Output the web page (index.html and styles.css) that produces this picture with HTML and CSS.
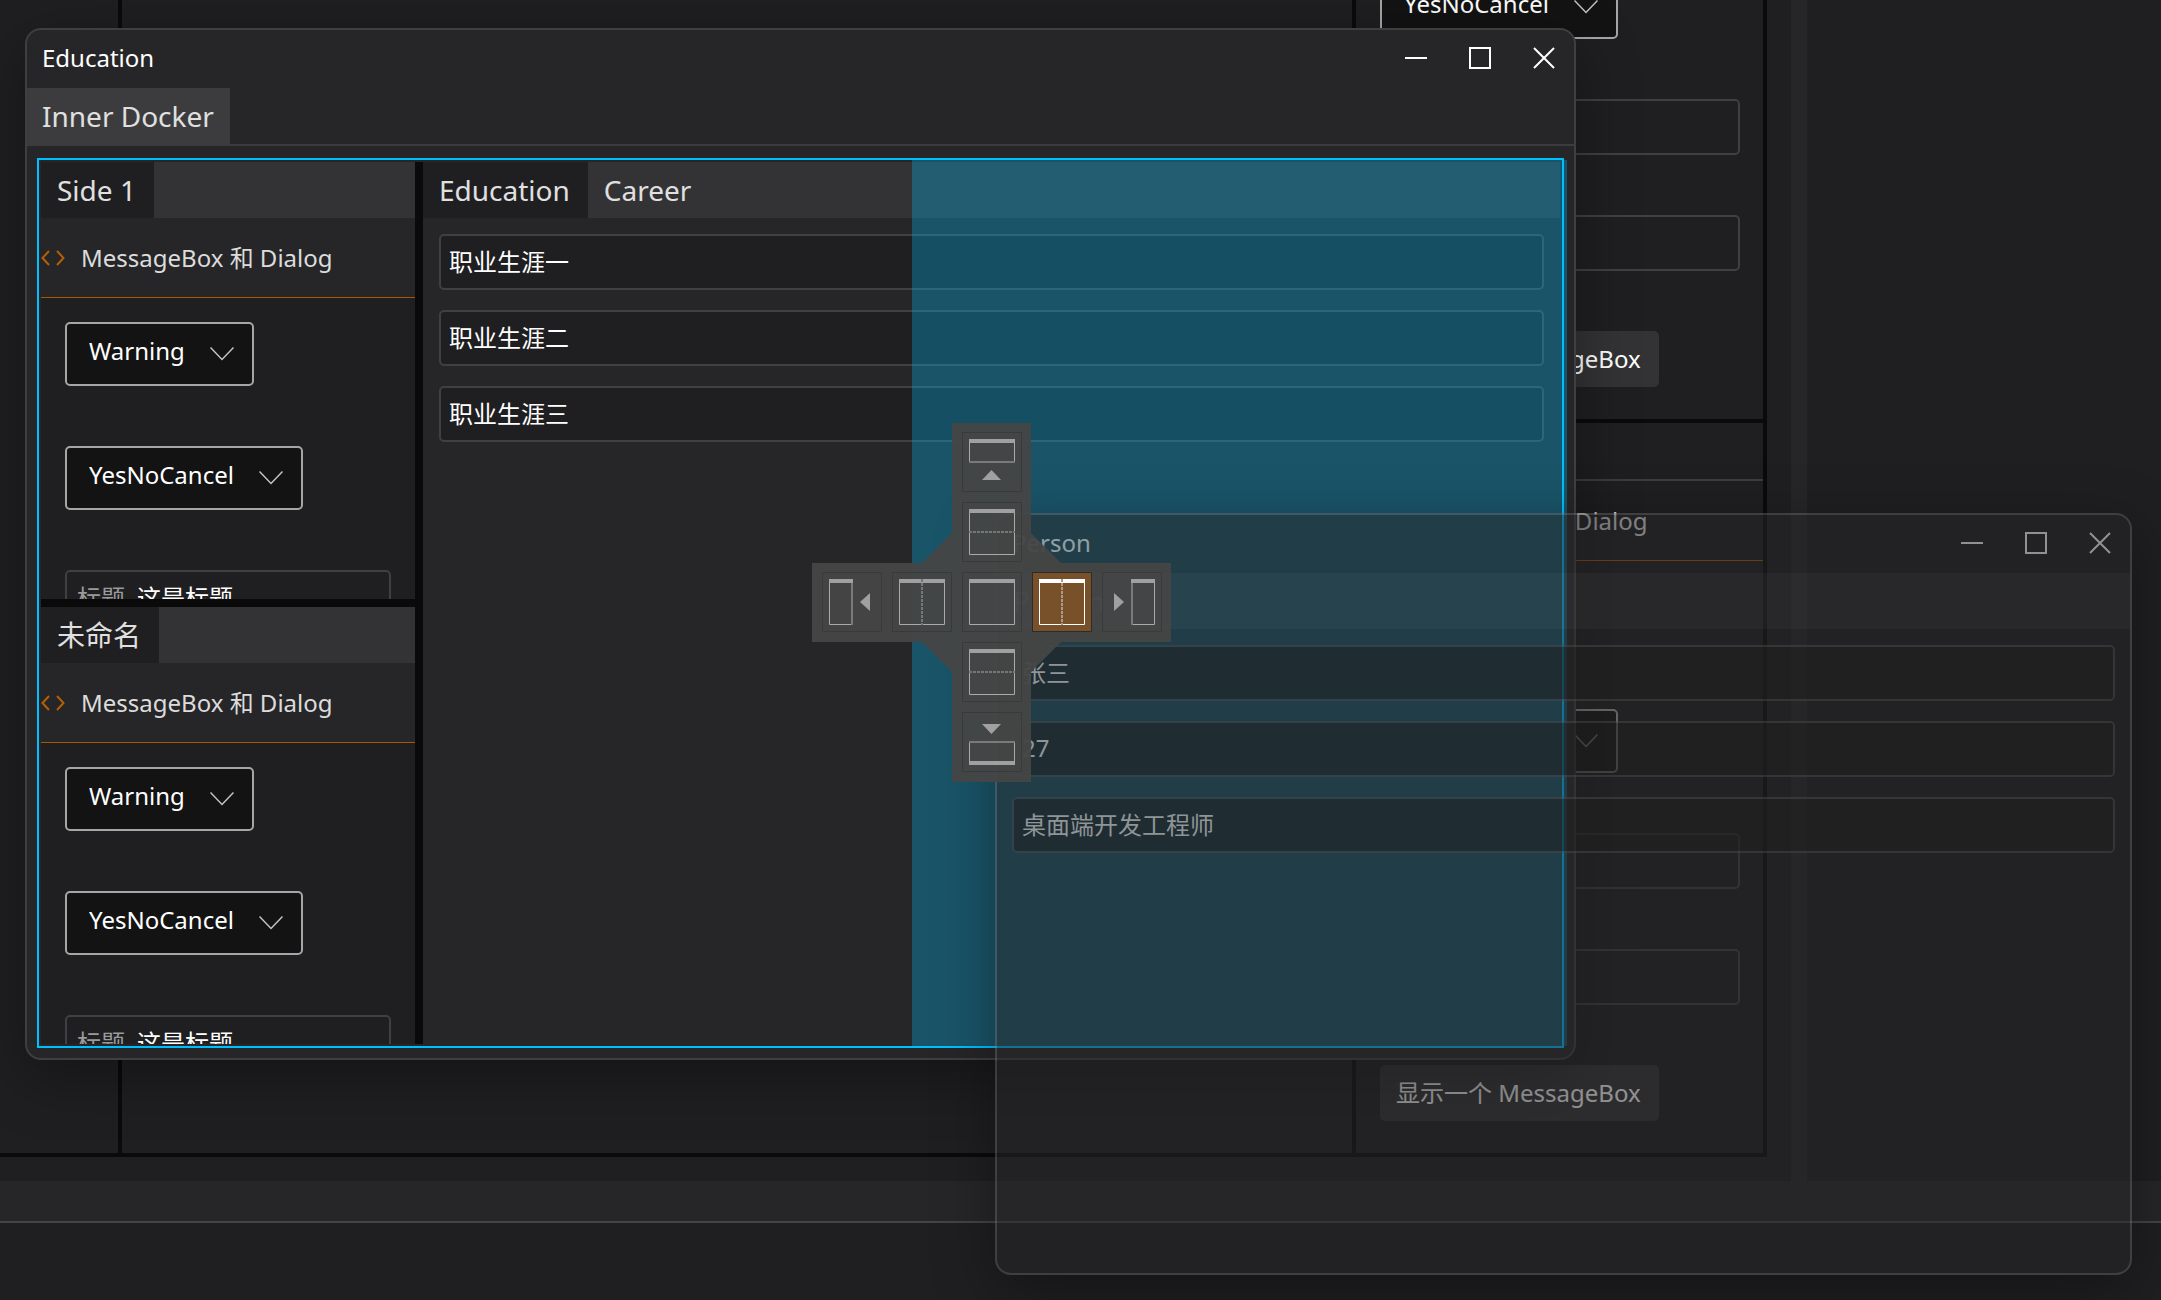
FILE: index.html
```html
<!DOCTYPE html>
<html lang="zh-CN">
<head>
<meta charset="utf-8">
<title>Docker</title>
<link rel="stylesheet" href="styles.css">
</head>
<body>
<svg class="defs" width="0" height="0" aria-hidden="true">
  <symbol id="chevron" viewBox="0 0 24 14"><path d="M0.5 0.5 12 12.5 23.5 0.5" fill="none" stroke="#c4c4c4" stroke-width="1.5"/></symbol>
  <symbol id="code" viewBox="0 0 24 16"><path d="M8 1 1.500 8 8 15M16 1 22.500 8 16 15" fill="none" stroke="#b45f06" stroke-width="2"/></symbol>
  <symbol id="minimize" viewBox="0 0 22 22"><path d="M0 11H22" stroke="#fff" stroke-width="2"/></symbol>
  <symbol id="maximize" viewBox="0 0 22 22"><path d="M1 1H21V21H1Z" fill="none" stroke="#fff" stroke-width="2"/></symbol>
  <symbol id="close" viewBox="0 0 22 22"><path d="M1 1 21 21M21 1 1 21" stroke="#fff" stroke-width="2"/></symbol>
</svg>

<main class="workspace">
  <div class="dock">
    <div class="dock-left"></div>
    <div class="dock-center"></div>
    <div class="dock-right">
      <section class="panel panel-top">
        <div class="form">
          <div class="combo"><select aria-label="图标"><option>Warning</option></select><svg><use href="#chevron"/></svg></div>
          <div class="combo"><select aria-label="按钮"><option>YesNoCancel</option></select><svg><use href="#chevron"/></svg></div>
          <label class="field"><span>标题</span><input type="text" value="这是标题"></label>
          <label class="field"><span>内容</span><input type="text" value="这是内容"></label>
          <button class="action" type="button">显示一个 MessageBox</button>
        </div>
      </section>
      <section class="panel">
        <div class="panel-tabs"></div>
        <h2 class="header"><svg><use href="#code"/></svg>MessageBox 和 Dialog</h2>
        <div class="form">
          <div class="combo"><select aria-label="图标"><option>Warning</option></select><svg><use href="#chevron"/></svg></div>
          <div class="combo"><select aria-label="按钮"><option>YesNoCancel</option></select><svg><use href="#chevron"/></svg></div>
          <label class="field"><span>标题</span><input type="text" value="这是标题"></label>
          <label class="field"><span>内容</span><input type="text" value="这是内容"></label>
          <button class="action" type="button">显示一个 MessageBox</button>
        </div>
      </section>
    </div>
  </div>
  <div class="gutter"></div>
  <div class="aside"></div>
</main>
<div class="toolbar"></div>
<footer class="status"></footer>

<section class="window window-education">
  <header class="titlebar">
    <h1>Education</h1>
    <button type="button" aria-label="最小化"><svg><use href="#minimize"/></svg></button>
    <button type="button" aria-label="最大化"><svg><use href="#maximize"/></svg></button>
    <button type="button" aria-label="关闭"><svg><use href="#close"/></svg></button>
  </header>
  <nav class="window-tabs"><button type="button">Inner Docker</button></nav>
  <div class="docker">
    <div class="side">
      <section class="pane">
        <nav class="tabs"><button class="active" type="button">Side 1</button></nav>
        <h2 class="header"><svg><use href="#code"/></svg>MessageBox 和 Dialog</h2>
        <div class="form">
          <div class="combo"><select aria-label="图标"><option>Warning</option></select><svg><use href="#chevron"/></svg></div>
          <div class="combo"><select aria-label="按钮"><option>YesNoCancel</option></select><svg><use href="#chevron"/></svg></div>
          <label class="field"><span>标题</span><input type="text" value="这是标题"></label>
        </div>
      </section>
      <section class="pane">
        <nav class="tabs"><button class="active" type="button">未命名</button></nav>
        <h2 class="header"><svg><use href="#code"/></svg>MessageBox 和 Dialog</h2>
        <div class="form">
          <div class="combo"><select aria-label="图标"><option>Warning</option></select><svg><use href="#chevron"/></svg></div>
          <div class="combo"><select aria-label="按钮"><option>YesNoCancel</option></select><svg><use href="#chevron"/></svg></div>
          <label class="field"><span>标题</span><input type="text" value="这是标题"></label>
        </div>
      </section>
    </div>
    <section class="main-pane">
      <nav class="tabs"><button class="active" type="button">Education</button><button type="button">Career</button></nav>
      <div class="entries">
        <input class="entry" type="text" aria-label="职业一" value="职业生涯一">
        <input class="entry" type="text" aria-label="职业二" value="职业生涯二">
        <input class="entry" type="text" aria-label="职业三" value="职业生涯三">
      </div>
    </section>
    <div class="drop-preview"></div>
  </div>
</section>

<section class="window window-person">
  <header class="titlebar">
    <h1>Person</h1>
    <button type="button" aria-label="最小化"><svg><use href="#minimize"/></svg></button>
    <button type="button" aria-label="最大化"><svg><use href="#maximize"/></svg></button>
    <button type="button" aria-label="关闭"><svg><use href="#close"/></svg></button>
  </header>
  <nav class="tabs"><button class="active" type="button">Person</button></nav>
  <div class="entries">
    <input class="entry" type="text" aria-label="姓名" value="张三">
    <input class="entry" type="text" aria-label="年龄" value="27">
    <input class="entry" type="text" aria-label="职业" value="桌面端开发工程师">
  </div>
</section>

<div class="compass">
  <button class="target edge-top" type="button" aria-label="停靠到顶部"><svg viewBox="0 0 58 58"><path class="frame" d="M6.500 8V30M51.500 8V30"/><path class="bar" d="M6 6H52V10H6Z"/><path class="rim" d="M6 28H52V30H6Z"/><path class="arrow" d="M28.500 37 38 47H19Z"/></svg></button>
  <button class="target split-top" type="button" aria-label="上方拆分"><svg viewBox="0 0 58 58"><path class="frame" d="M6.500 6.500H51.500V51.500H6.500Z"/><path class="bar" d="M6 6H52V10H6Z"/><path class="dash" d="M6 29H52"/></svg></button>
  <button class="target edge-left" type="button" aria-label="停靠到左侧"><svg viewBox="0 0 58 58"><path class="frame" d="M6.500 6.500V51.500H29"/><path class="rim" d="M28 6H30V52H28Z"/><path class="bar" d="M6 6H30V10H6Z"/><path class="arrow" d="M37 29 47 20V38Z"/></svg></button>
  <button class="target split-left" type="button" aria-label="左侧拆分"><svg viewBox="0 0 58 58"><path class="frame" d="M6.500 6.500H51.500V51.500H6.500Z"/><path class="bar" d="M6 6H52V10H6Z"/><path class="dash" d="M29 6V52"/></svg></button>
  <button class="target center" type="button" aria-label="合并为标签"><svg viewBox="0 0 58 58"><path class="frame" d="M6.500 6.500H51.500V51.500H6.500Z"/><path class="bar" d="M6 6H52V10H6Z"/></svg></button>
  <button class="target split-right hot" type="button" aria-label="右侧拆分"><svg viewBox="0 0 58 58"><path class="frame" d="M6.500 6.500H51.500V51.500H6.500Z"/><path class="bar" d="M6 6H52V10H6Z"/><path class="dash" d="M29 6V52"/></svg></button>
  <button class="target edge-right" type="button" aria-label="停靠到右侧"><svg viewBox="0 0 58 58"><path class="frame" d="M29 51.500H51.500V6.500"/><path class="rim" d="M28 6H30V52H28Z"/><path class="bar" d="M28 6H52V10H28Z"/><path class="arrow" d="M21 29 11 20V38Z"/></svg></button>
  <button class="target split-bottom" type="button" aria-label="下方拆分"><svg viewBox="0 0 58 58"><path class="frame" d="M6.500 6.500H51.500V51.500H6.500Z"/><path class="bar" d="M6 6H52V10H6Z"/><path class="dash" d="M6 29H52"/></svg></button>
  <button class="target edge-bottom" type="button" aria-label="停靠到底部"><svg viewBox="0 0 58 58"><path class="frame" d="M6.500 28V50M51.500 28V50"/><path class="rim" d="M6 28H52V30H6Z"/><path class="bar" d="M6 48H52V52H6Z"/><path class="arrow" d="M28.500 21 38 11H19Z"/></svg></button>
</div>
</body>
</html>
```
FILE: styles.css
```css
* {
  box-sizing: border-box;
}

body {
  margin: 0;
  height: 100vh;
  display: flex;
  flex-direction: column;
  overflow: hidden;
  position: relative;
  background: #1f1f21;
  color: #fff;
  font-family: "Noto Sans", "Noto Sans CJK SC", sans-serif;
  font-size: 24px;
  line-height: 32px;
}

button,
input,
select {
  margin: 0;
  padding: 0;
  border: 0;
  border-radius: 0;
  background: none;
  color: inherit;
  font: inherit;
}

h1,
h2 {
  margin: 0;
  font-size: 24px;
  font-weight: 400;
}

svg {
  display: block;
}

.defs {
  position: absolute;
}

/* Desktop behind the floating windows */

.workspace {
  flex: 1;
  min-height: 0;
  display: flex;
}

.dock {
  flex: 1;
  display: flex;
  margin-bottom: 24px;
  border-right: 4px solid #0a0a0a;
  border-bottom: 4px solid #0a0a0a;
}

.dock-left {
  width: 122px;
  border-right: 4px solid #0a0a0a;
}

.dock-center {
  flex: 1;
}

.dock-right {
  width: 411px;
  display: flex;
  flex-direction: column;
  border-left: 4px solid #0a0a0a;
}

.panel {
  flex: none;
}

.panel-top {
  flex: 1;
  min-height: 0;
  display: flex;
  flex-direction: column;
  justify-content: flex-end;
  overflow: hidden;
  border-bottom: 4px solid #0a0a0a;
}

.panel .form {
  padding-right: 23px;
  padding-bottom: 32px;
}

.panel .header {
  background: none;
}

.panel-tabs {
  height: 58px;
  border-bottom: 2px solid #3c3c3e;
}

.gutter {
  width: 40px;
  border-right: 16px solid #262628;
}

.aside {
  width: 354px;
}

.toolbar {
  height: 40px;
  background: #262628;
}

.status {
  height: 79px;
  border-top: 2px solid #444446;
}

/* Form parts */

.header {
  height: 80px;
  display: flex;
  align-items: center;
  gap: 16px;
  border-bottom: 1px solid #a85800;
  background: #262628;
  color: #dcdcdc;
  white-space: nowrap;
}

.header svg {
  width: 24px;
  height: 16px;
}

.form {
  display: flex;
  flex-direction: column;
  align-items: flex-start;
  gap: 60px;
  padding: 24px 24px 0;
}

.combo {
  display: grid;
  align-items: center;
}

.combo select,
.combo svg {
  grid-area: 1 / 1;
}

.combo select {
  height: 64px;
  padding: 0 67px 6px 22px;
  appearance: none;
  border: 2px solid #a6a6a6;
  border-radius: 5px;
  background: #131313;
}

.combo svg {
  width: 24px;
  height: 14px;
  margin-right: 20px;
  justify-self: end;
  pointer-events: none;
}

.field {
  width: 100%;
  max-width: 360px;
  height: 56px;
  display: flex;
  align-items: center;
  gap: 12px;
  padding: 0 10px;
  border: 2px solid #404042;
  border-radius: 5px;
}

.field span {
  flex: none;
  color: #9a9a9a;
}

.field input {
  flex: 1;
  min-width: 0;
}

.action {
  height: 56px;
  padding: 0 18px 0 16px;
  border-radius: 5px;
  background: #333335;
}

/* Floating windows */

.window {
  position: absolute;
  display: flex;
  flex-direction: column;
  overflow: hidden;
  border: 2px solid #3f3f41;
  border-radius: 16px;
  background: #262628;
  box-shadow: 0 16px 60px rgba(0, 0, 0, 0.35);
}

.window-education {
  left: 25px;
  top: 28px;
  width: 1551px;
  height: 1032px;
}

.titlebar {
  height: 58px;
  flex: none;
  display: flex;
  align-items: center;
  gap: 42px;
  padding: 0 19px 2px 15px;
}

.titlebar h1 {
  flex: 1;
}

.titlebar svg {
  width: 22px;
  height: 22px;
}

.window-tabs {
  flex: none;
  border-bottom: 2px solid #3c3c3e;
}

.window-tabs button {
  height: 56px;
  padding: 0 16px 0 15px;
  background: #3c3c3e;
  color: #e0e0e0;
  font-size: 28px;
}

.tabs {
  flex: none;
  display: flex;
  background: #333335;
}

.tabs button {
  height: 56px;
  padding: 0 18px 0 16px;
  color: #e0e0e0;
  font-size: 28px;
}

.tabs .active {
  background: #1f1f21;
}

.docker {
  flex: 1;
  min-height: 0;
  position: relative;
  display: flex;
  margin: 12px 10px 10px;
  padding: 2px;
  border: 2px solid #00bfff;
}

.side {
  width: 382px;
  flex: none;
  display: flex;
  flex-direction: column;
  gap: 8px;
  border-right: 8px solid #0a0a0a;
  background: #0a0a0a;
}

.pane {
  flex: 1;
  min-height: 0;
  overflow: hidden;
  background: #1f1f21;
}

.main-pane {
  flex: 1;
  min-width: 0;
}

.entries {
  display: flex;
  flex-direction: column;
  gap: 20px;
  padding: 16px;
}

.entry {
  width: 100%;
  height: 56px;
  padding: 0 8px 3px;
  border: 2px solid #404042;
  border-radius: 5px;
  background: #1f1f21;
}

/* Window being dragged: see-through */

.window-person {
  left: 995px;
  top: 513px;
  width: 1137px;
  height: 762px;
  border-color: rgba(96, 96, 98, 0.5);
  background: rgba(38, 38, 40, 0.5);
  background-clip: padding-box;
}

.window-person .titlebar {
  opacity: 0.5;
}

.window-person .tabs {
  background: rgba(255, 255, 255, 0.03);
}

.window-person .tabs .active {
  background: none;
  opacity: 0.5;
}

.window-person .entries {
  padding: 16px 15px;
}

.window-person .entry {
  border-color: rgba(72, 72, 74, 0.5);
  background: rgba(29, 29, 30, 0.5);
  background-clip: padding-box;
  color: #8f9597;
}

/* Docking feedback */

.drop-preview {
  position: absolute;
  left: 873px;
  right: -5px;
  top: 0;
  bottom: 0;
  background: rgba(0, 191, 255, 0.3);
}

.compass {
  position: absolute;
  left: 812px;
  top: 423px;
  width: 360px;
  height: 360px;
  display: grid;
  grid-template-columns: repeat(5, 60px);
  grid-template-rows: repeat(5, 60px);
  grid-template-areas:
    ". . t . ."
    ". . st . ."
    "l sl c sr r"
    ". . sb . ."
    ". . b . .";
  gap: 10px;
  padding: 9px 10px 11px;
  background: rgba(70, 70, 70, 0.95);
  clip-path: polygon(140px 0, 219px 0, 219px 110px, 249px 140px, 359px 140px, 359px 219px, 249px 219px, 219px 249px, 219px 359px, 140px 359px, 140px 249px, 110px 219px, 0 219px, 0 140px, 110px 140px, 140px 110px);
}

.target {
  border: 1px solid #3a3a3a;
}

.edge-top { grid-area: t; }
.split-top { grid-area: st; }
.edge-left { grid-area: l; }
.split-left { grid-area: sl; }
.center { grid-area: c; }
.split-right { grid-area: sr; }
.edge-right { grid-area: r; }
.split-bottom { grid-area: sb; }
.edge-bottom { grid-area: b; }

.frame {
  fill: none;
  stroke: #aaa;
}

.bar,
.arrow {
  fill: #a0a0a0;
}

.rim {
  fill: #7a7a7a;
}

.dash {
  fill: none;
  stroke: #757777;
  stroke-width: 2;
  stroke-dasharray: 3 1;
}

.hot {
  border-color: #2c2c2c;
  background: #78502a;
}

.hot .frame {
  stroke: #fff;
}

.hot .bar {
  fill: #fff;
}

.hot .dash {
  stroke: #b09a84;
}
```
